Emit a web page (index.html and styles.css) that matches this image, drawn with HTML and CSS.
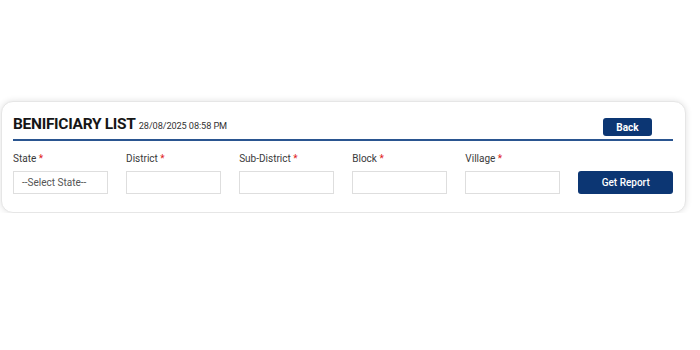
FILE: index.html
```html
<!DOCTYPE html>
<html lang="en">
<head>
  <meta charset="UTF-8">
  <title>Beneficiary List</title>
  <link rel="stylesheet" href="styles.css">
</head>
<body>
  <div class="card">
    <div class="card-head">
      <h1>BENIFICIARY LIST <span class="stamp">28/08/2025 08:58 PM</span></h1>
      <button class="btn btn-back">Back</button>
    </div>

    <div class="filters">
      <div class="field">
        <label>State <span class="req">*</span></label>
        <div class="input select">--Select State--</div>
      </div>
      <div class="field">
        <label>District <span class="req">*</span></label>
        <div class="input"></div>
      </div>
      <div class="field">
        <label>Sub-District <span class="req">*</span></label>
        <div class="input"></div>
      </div>
      <div class="field">
        <label>Block <span class="req">*</span></label>
        <div class="input"></div>
      </div>
      <div class="field">
        <label>Village <span class="req">*</span></label>
        <div class="input"></div>
      </div>
      <div class="field">
        <button class="btn btn-report">Get Report</button>
      </div>
    </div>
  </div>
</body>
</html>
```

FILE: styles.css
```css
body {
  margin: 0;
  padding: 0;
  background-color: #ffffff;
  font-family: Roboto, 'Liberation Sans', Arial, sans-serif;
  color: #222222;
}

.card {
  margin: 101px 14px 0 1px;
  padding: 12px 12px 18px 11px;
  background-color: #ffffff;
  border: 1px solid #e6e6e6;
  border-radius: 12px;
  box-shadow: 0 0 6px rgba(0, 0, 0, 0.12);
}

.card-head {
  display: flex;
  justify-content: space-between;
  align-items: flex-end;
  padding-bottom: 3px;
  border-bottom: 2px solid #2a5590;
}

h1 {
  margin: 0;
  font-size: 15.5px;
  font-weight: 700;
  letter-spacing: -0.3px;
  color: #161616;
  line-height: 20px;
}

.stamp {
  font-size: 9.2px;
  font-weight: 400;
  letter-spacing: -0.1px;
  color: #333333;
}

.btn {
  background-color: #0c3673;
  color: #ffffff;
  border: none;
  border-radius: 3px;
  font-family: inherit;
  font-weight: 500;
  font-size: 10px;
  cursor: pointer;
}

.btn-back {
  width: 49px;
  height: 18px;
  margin-right: 21px;
  font-weight: 700;
}

.filters {
  display: grid;
  grid-template-columns: repeat(6, 1fr);
  column-gap: 18.5px;
  margin-top: 12px;
}

.field {
  display: flex;
  flex-direction: column;
  justify-content: flex-end;
}

label {
  font-size: 10px;
  color: #3a3a3a;
  margin-bottom: 6px;
  line-height: 12px;
}

.req {
  color: #e02020;
}

.input {
  height: 21px;
  border: 1px solid #dedede;
  box-sizing: content-box;
  font-size: 10px;
  line-height: 21px;
  padding: 0 8px;
  color: #555555;
}

.btn-report {
  height: 23px;
}
```
